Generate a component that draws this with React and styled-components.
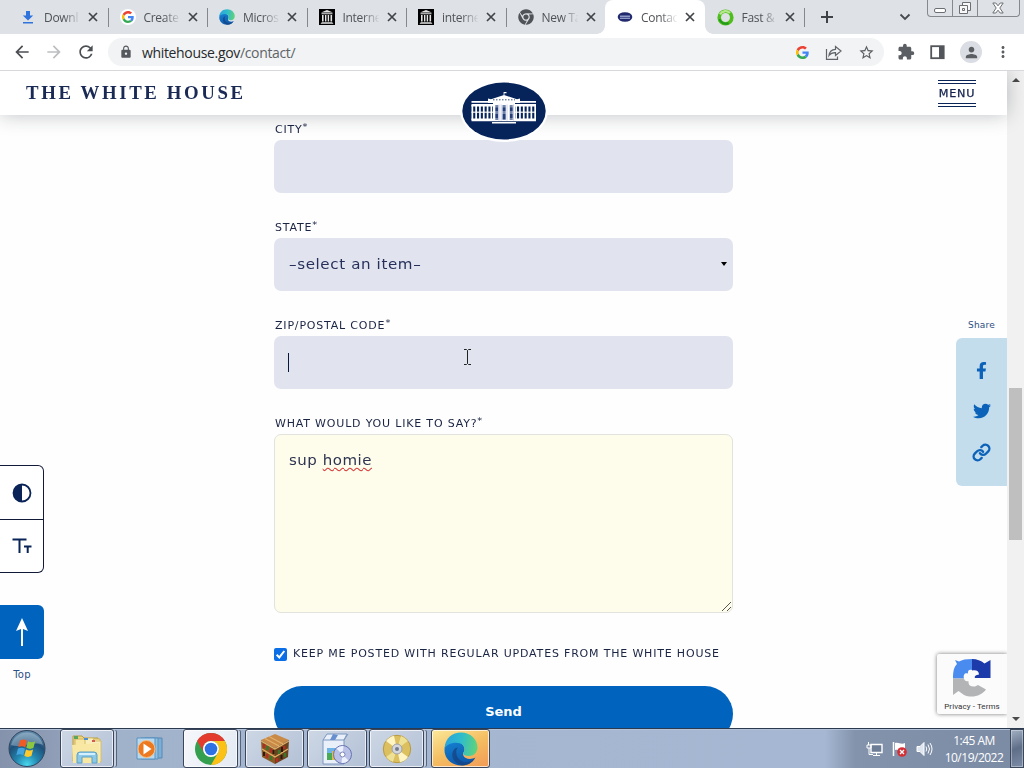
import React from "react";
import styled, { createGlobalStyle, css } from "styled-components";
import { Link2 as _L, Link as LinkIcon } from "lucide-react";
import { FaFacebookF, FaTwitter, FaChrome } from "react-icons/fa";
import { MdExtension, MdLock, MdPerson, MdMoreVert, MdArrowBack, MdArrowForward, MdRefresh, MdStarBorder } from "react-icons/md";

const NAVY = "#0a2458";
const BLUE = "#0063bd";
const UI = `"Open Sans", "Noto Sans", sans-serif`;
const WIDE = `"DejaVu Sans", sans-serif`;

const Global = createGlobalStyle`
  *, *::before, *::after { box-sizing: border-box; }
  body { margin: 0; overflow: hidden; background: #fff; font-family: ${UI}; }
  svg { display: block; flex: none; }
`;

const Screen = styled.div`
  width: 1024px;
  height: 768px;
  display: flex;
  flex-direction: column;
  overflow: hidden;
`;

/* Browser tabs */
const TabStrip = styled.div`
  height: 34px;
  flex: none;
  display: flex;
  padding-left: 8px;
  background: #dee1e6;
`;
const Tab = styled.div`
  position: relative;
  width: 99.5px;
  flex: none;
  display: flex;
  align-items: center;
  padding: 0 9px 0 12px;
  font-size: 12px;
  color: #505357;
  ${(p) => p.$active && css`
    background: #fff;
    border-radius: 8px 8px 0 0;
    &::before, &::after {
      content: "";
      position: absolute;
      bottom: 0;
      width: 8px;
      height: 8px;
    }
    &::before { left: -8px; background: radial-gradient(circle at 0 0, transparent 7.5px, #fff 8px); }
    &::after { right: -8px; background: radial-gradient(circle at 100% 0, transparent 7.5px, #fff 8px); }
  `}
`;
const TabTitle = styled.span`
  width: 36px;
  margin-left: 8px;
  margin-right: 8px;
  overflow: hidden;
  white-space: nowrap;
  letter-spacing: -0.3px;
  mask-image: linear-gradient(90deg, #000 55%, transparent 102%);
`;
const TabLine = styled.div`
  width: 1px;
  height: 19px;
  margin: 8px -1px 0 0;
  background: #84878b;
`;
const StripTools = styled.div`
  flex: 1;
  display: flex;
  align-items: flex-start;
`;
const NewTab = styled.div` margin: 10px 0 0 16px; `;
const TabSearch = styled.div` margin: 13px 0 0 65px; `;
const WindowButtons = styled.div`
  display: flex;
  width: 93px;
  height: 17px;
  margin-left: 16px;
  border: 1px solid #85888d;
  border-top: 0;
  border-radius: 0 0 4px 4px;
`;
const WindowButton = styled.div`
  width: ${(p) => p.$w}px;
  height: 16px;
  display: flex;
  align-items: center;
  justify-content: center;
  & + & { border-left: 1px solid #85888d; }
`;

/* Toolbar */
const Toolbar = styled.div`
  height: 37px;
  flex: none;
  display: flex;
  align-items: center;
  padding: 0 12px 0 12px;
  background: #fff;
  border-bottom: 1px solid #d6d8db;
  color: #5b5e62;
`;
const NavIcons = styled.div`
  display: flex;
  gap: 12px;
`;
const AddressBar = styled.div`
  display: flex;
  align-items: center;
  width: 776px;
  height: 28px;
  margin-left: 12px;
  padding: 0 9px 0 11px;
  border-radius: 14px;
  background: #f1f3f4;
`;
const Url = styled.div`
  flex: 1;
  margin-left: 9px;
  font-size: 14px;
  letter-spacing: -0.34px;
  color: #5f6368;
  b { font-weight: 400; color: #27292c; }
`;
const AddressActions = styled.div`
  display: flex;
  align-items: center;
  gap: 16px;
`;
const ToolActions = styled.div`
  display: flex;
  align-items: center;
  gap: 15px;
  margin-left: 13px;
`;
const Avatar = styled.div`
  width: 22px;
  height: 22px;
  border-radius: 50%;
  background: #dadde3;
  display: grid;
  place-items: center;
  margin-right: -3px;
`;

/* Web page */
const Viewport = styled.div`
  height: 657px;
  flex: none;
  display: flex;
  overflow: hidden;
`;
const Page = styled.div`
  width: 1007px;
  height: 657px;
  background: #fefefe;
`;
const Header = styled.header`
  position: relative;
  z-index: 2;
  height: 44px;
  display: flex;
  align-items: center;
  justify-content: space-between;
  padding: 0 31px 0 26px;
  background: #fff;
  box-shadow: 0 0 20px rgba(30, 35, 45, 0.28);
`;
const Wordmark = styled.div`
  font: bold 18px "Liberation Serif", serif;
  letter-spacing: 2.5px;
  transform: scaleX(1.045);
  transform-origin: left;
  color: #1a2a55;
`;
const Seal = styled.div`
  position: absolute;
  left: 460px;
  top: 9px;
`;
const MenuButton = styled.div`
  width: 38px;
  height: 27px;
  border-top: 4px double ${NAVY};
  border-bottom: 4px double ${NAVY};
  color: #14234e;
`;
const MenuText = styled.div`
  font: 10px/19px ${WIDE};
  letter-spacing: 0.7px;
  text-align: center;
  white-space: nowrap;
  transform: scaleX(1.12);
  -webkit-text-stroke: 0.25px #14234e;
`;
const Columns = styled.div`
  display: grid;
  grid-template-columns: 274px 459px 274px;
  height: 613px;
`;
const LeftRail = styled.aside`
  padding-top: 350px;
  width: 44px;
`;
const AccessBox = styled.div`
  height: 108px;
  display: grid;
  grid-template-rows: 1fr 1fr;
  border: 1px solid #111a38;
  border-left: 0;
  border-radius: 0 6px 6px 0;
  background: #fff;
`;
const AccessItem = styled.div`
  display: grid;
  place-items: center;
  & + & { border-top: 1px solid #111a38; }
`;
const TopButton = styled.div`
  height: 54px;
  margin: 32px 0 9px;
  display: grid;
  place-items: center;
  background: ${BLUE};
  border-radius: 0 6px 6px 0;
`;
const RailLabel = styled.div`
  font: ${(p) => p.$size}px/14px ${WIDE};
  letter-spacing: 0.2px;
  text-align: center;
  color: #2c4f84;
`;
const Form = styled.form`
  display: flex;
  flex-direction: column;
  gap: 20px;
`;
const Caps = styled.span`
  display: inline-block;
  font-family: ${WIDE};
  font-size: 10px;
  letter-spacing: 0.74px;
  text-transform: uppercase;
  white-space: nowrap;
  transform: scaleX(1.1);
  transform-origin: left;
  color: #1a2443;
  sup { font-size: 9px; line-height: 0; vertical-align: 3px; letter-spacing: 0; }
`;
const Label = styled.label`
  display: block;
  height: 25px;
  padding-left: 0.5px;
  line-height: 29px;
  font-size: 10px;
`;
const Control = styled.div`
  height: 53px;
  display: flex;
  align-items: center;
  justify-content: space-between;
  padding: 0 6px 1px 14px;
  border-radius: 7px;
  background: #e1e4ee;
  font: 15px ${WIDE};
  color: #26305a;
`;
const ControlText = styled.span`
  font-size: 14.5px;
  letter-spacing: 0.6px;
  transform: scaleX(1.04);
  transform-origin: left;
  margin-left: 0.5px;
`;
const Caret = styled.i`
  width: 1px;
  height: 19px;
  background: #0a1640;
`;
const Pointer = styled.div` margin-right: 256px; margin-top: -11px; `;
const Message = styled.div`
  height: 179px;
  display: flex;
  flex-direction: column;
  justify-content: space-between;
  padding: 16px 1px 1px 14px;
  border: 1px solid #e2e3dc;
  border-radius: 7px;
  background: #fefceb;
  font: 14.5px/18px ${WIDE};
  color: #2d3450;
`;
const MessageText = styled.span`
  letter-spacing: 0.5px;
  transform: scaleX(1.035);
  transform-origin: left;
`;
const Typo = styled.span`
  text-decoration: underline wavy #d53636 1px;
  text-decoration-skip-ink: none;
  text-underline-offset: 2px;
`;
const Grip = styled.div` align-self: flex-end; `;
const Consent = styled.div`
  display: flex;
  align-items: center;
  gap: 6px;
  height: 14px;
  margin-top: 14px;
  ${Caps} { margin-top: -2px; }
`;
const Check = styled.span`
  width: 13px;
  height: 13px;
  border-radius: 2px;
  background: #0a6fe6;
`;
const SendButton = styled.div`
  height: 56px;
  margin-top: 5px;
  border-radius: 28px;
  background: ${BLUE};
  color: #fff;
  font: bold 13px/51px ${WIDE};
  letter-spacing: -0.1px;
  text-align: center;
`;
const RightRail = styled.aside`
  display: flex;
  flex-direction: column;
  align-items: flex-end;
  padding-top: 203px;
`;
const Share = styled.div` width: 51px; `;
const ShareBox = styled.div`
  height: 148px;
  margin-top: 6px;
  display: flex;
  flex-direction: column;
  align-items: center;
  gap: 23px;
  padding-top: 24px;
  border-radius: 6px 0 0 6px;
  background: #c4dded;
  color: #0b62b8;
`;
const Recaptcha = styled.div`
  width: 70px;
  height: 60px;
  margin-top: 168px;
  padding-top: 5px;
  display: flex;
  flex-direction: column;
  align-items: center;
  gap: 4px;
  background: #fbfbfb;
  border-radius: 2px 0 0 2px;
  box-shadow: 0 0 4px #777;
  clip-path: inset(-5px 0 -5px -5px);
  font: 8px/12px Roboto, sans-serif;
  letter-spacing: 0.08px;
  color: #333;
  white-space: nowrap;
`;
const Scrollbar = styled.div`
  width: 17px;
  display: flex;
  flex-direction: column;
  align-items: center;
  justify-content: space-between;
  padding: 7px 0 7px;
  background: #f1f1f1;
`;
const Arrow = styled.i`
  border: 4px solid transparent;
  ${(p) => (p.$up ? "border-top: 0; border-bottom: 4px solid #4a4a4a;" : "border-bottom: 0; border-top: 4px solid #4a4a4a;")}
`;
const Thumb = styled.div`
  width: 13px;
  height: 152px;
  margin-top: 129px;
  background: #bfbfbf;
`;

/* Taskbar */
const Taskbar = styled.div`
  height: 40px;
  flex: none;
  display: flex;
  align-items: stretch;
  border-top: 1px solid #2c3a50;
  box-shadow: inset 0 1px 0 #b3c2d8;
  background: linear-gradient(90deg, #8493ab 0, #8f9eb6 55px, #a0b1ca 120px, #a5b6d0 300px, #a5b7d2 825px, #8393ac 855px, #7b8ba4 100%);
`;
const Start = styled.div` margin: 0 14px 0 8px; `;
const Task = styled.div`
  width: ${(p) => p.$w}px;
  margin-right: ${(p) => p.$gap}px;
  display: grid;
  place-items: center;
  border-radius: 3px;
  ${(p) => !p.$flat && css`
    border: 1px solid #3a465b;
    box-shadow: inset 0 0 0 1px rgba(255, 255, 255, 0.7)${p.$stack ? ", 3px 0 0 -1px #c4d0e2, 4px 0 0 -1px #56647c" : ""};
    background: ${p.$bg || "linear-gradient(135deg, #cdd7e5, #b3c1d6)"};
  `}
`;
const Tray = styled.div`
  margin-left: auto;
  display: flex;
  align-items: center;
  gap: 8px;
`;
const Clock = styled.div`
  width: 60px;
  margin: 0 0 0 3px;
  font-size: 12px;
  line-height: 17px;
  letter-spacing: -0.5px;
  text-align: center;
  white-space: nowrap;
  color: #fff;
`;
const ShowDesktop = styled.div`
  width: 14px;
  height: 39px;
  margin: 0 0 0 -2px;
  border: 1px solid #3b485c;
  box-shadow: inset 0 0 0 1px rgba(255, 255, 255, 0.35);
  background: linear-gradient(160deg, #a3b0c3, #5f6f88 50%, #7c8ca6);
`;

const Close = () => (
  <svg width="10" height="10" viewBox="0 0 10 10" stroke="#404347" strokeWidth="1.7"><path d="M1 1l8 8M9 1l-8 8" /></svg>
);
const Google = ({ size = 16 }) => (
  <svg width={size} height={size} viewBox="0 0 48 48">
    <path fill="#EA4335" d="M24 9.5c3.54 0 6.7 1.22 9.2 3.6l6.85-6.85C35.9 2.4 30.5 0 24 0 14.6 0 6.5 5.4 2.6 13.2l8 6.2C12.4 13.7 17.7 9.5 24 9.5z" />
    <path fill="#4285F4" d="M47 24.6c0-1.6-.2-3.1-.4-4.6H24v9h12.9c-.6 3-2.2 5.5-4.7 7.2l7.7 6C44.4 38 47 32 47 24.600z" />
    <path fill="#FBBC05" d="M10.500 28.600A14.500 14.500 0 0 1 10.500 19.400l-8-6.200a24 24 0 0 0 0 21.600z" />
    <path fill="#34A853" d="M24 48c6.500 0 11.900-2.100 15.900-5.800l-7.700-6c-2.200 1.500-4.900 2.300-8.200 2.300-6.300 0-11.600-4.200-13.500-9.900l-8 6.200C6.500 42.600 14.600 48 24 48z" />
  </svg>
);
const GoogleDisc = () => (
  <svg width="16" height="16" viewBox="0 0 16 16"><circle cx="8" cy="8" r="8" fill="#fff" /><g transform="translate(2 2)"><Google size={12} /></g></svg>
);
const Download = () => (
  <svg width="16" height="16" viewBox="0 0 16 16" fill="#2f73dd"><path d="M6 2h4v4.500h3.200L8 11.500 2.800 6.500H6zM3 13h10v1.500H3z" /></svg>
);
const Edge = ({ size = 16, id }) => (
  <svg width={size} height={size} viewBox="0 0 32 32">
    <defs>
      <linearGradient id={id + "a"} x1="0" y1="0.3" x2="1" y2="0.4"><stop stopColor="#2ba3dd" /><stop offset="0.5" stopColor="#2fbccb" /><stop offset="1" stopColor="#5fd37b" /></linearGradient>
      <linearGradient id={id + "b"} x1="0" y1="0" x2="0.5" y2="1"><stop stopColor="#1583d3" /><stop offset="1" stopColor="#0e57ab" /></linearGradient>
    </defs>
    <path fill={"url(#" + id + "b)"} d="M.5 16C1 9.500 6 7.500 11 8.500c6 1 9 5 8.200 9-.4 1.500-1.700 2.500-1 4.500 1.200 3.300 6.800 4.500 11.300 2C27 29 22 31.500 16 31.500 7.500 31.500 0 25 .5 16z" />
    <path fill={"url(#" + id + "a)"} d="M.6 15C1 6 8 .5 16 .5c9 0 15.500 6.500 15.500 14 0 5-3.800 8-8 8-3.500 0-5.500-1.200-5.500-2.300 0-1 1.400-1.600 1.400-4 0-3.600-3.200-6.200-8-6.200C6.500 10 2.500 12 .6 15z" />
    <path fill="#154381" d="M13 14.500c-3 4-1.500 11 5 13.500 4 1.500 8.500-.5 11.500-4C26 30 21 31.700 17 31.500 9.500 29.500 7 24 8 19.500c.8-3 2.500-4.600 5-5z" opacity=".75" />
  </svg>
);
const Archive = () => (
  <svg width="16" height="16" viewBox="0 0 16 16">
    <path fill="#000" d="M0 0h16v16H0z" />
    <path fill="#e5e5e5" d="M8 1l6 2.500H2zM2.500 4.200h11v1h-11zM3 6h1.600v6.500H3zM6 6h1.400v6.500H6zM8.700 6h1.400v6.500H8.700zM11.500 6h1.600v6.500h-1.600zM2.500 13h11v.8h-11zM1.800 14.300h12.400v.8H1.800z" />
  </svg>
);
const MiniSeal = () => (
  <svg width="16" height="16" viewBox="0 0 16 16"><ellipse cx="8" cy="8" rx="7.300" ry="4.800" fill="#202a6c" /><path d="M3 6.500h10V10H3z" fill="#8f9bc6" /><path d="M3 8.500h10" stroke="#4c5794" /></svg>
);
const Ring = () => (
  <svg width="17" height="17" viewBox="0 0 17 17" fill="none"><circle cx="8.500" cy="8.500" r="6.300" stroke="#4fbd1c" strokeWidth="3.600" /><path d="M3 5.400A6.300 6.300 0 0 1 13 4" stroke="#b5e88c" strokeWidth="2.400" /><path d="M2.500 10a6.300 6.300 0 0 0 9 4" stroke="#23991d" strokeWidth="2" /></svg>
);
const ShareIcon = () => (
  <svg width="17" height="17" viewBox="0 0 17 17" fill="none" stroke="#606469" strokeWidth="1.200"><path d="M1.500 5v10.300h11V12.500M4 11.500C4.500 7.500 7 5.500 10.500 5.300V2.500L16 7l-5.500 4.500V8.700C7.500 8.600 5.500 9.500 4 11.500z" /></svg>
);
const SidePanel = () => (
  <svg width="15" height="15" viewBox="0 0 15 15"><rect x="1.200" y="1.200" width="12.500" height="12" fill="#fff" stroke="#525559" strokeWidth="1.800" /><path d="M9 1h5v12.500H9z" fill="#525559" /></svg>
);

const WhiteHouse = () => {
  const wing = [0, 1, 2, 3, 4, 5];
  return (
    <svg width="88" height="62" viewBox="0 0 88 62">
      <ellipse cx="44" cy="31" rx="44" ry="31" fill="#fff" />
      <ellipse cx="44" cy="31" rx="41.700" ry="28.500" fill="#06235a" />
      <g fill="#fff">
        <path d="M11.500 21h21v1.700h-21zM55 21h21v1.700H55zM28 18.500l3 .8L44 15l13 4.300 3-.8v2.700H28zM11.500 24h64.500v2.500H11.500zM11.500 38.500h64.500v2.700H11.500zM32 42h24v1.500H32zM43.600 12h.8v4h-.8zM44 12h2.500v1.300H44zM28 20.500h32V23H28zM33 22.500h22V40H33z" />
        {wing.map((i) => <path key={"l" + i} d={`M${11.500 + i * 3.800} 25h1.700v15h-1.700z`} />)}
        {wing.map((i) => <path key={"r" + i} d={`M${55.300 + i * 3.800} 25h1.700v15h-1.700z`} />)}
        <path d="M11.500 31.500h22v1.400h-22zM55 31.500h21v1.400H55z" opacity=".75" />
      </g>
      <g fill="#7485ad"><path d="M35.300 25h3v15h-3zM42.500 25h3.200v15h-3.200zM49.700 25h3v15h-3z" /></g>
      <path d="M39 24.500v16M41.200 24.500v16M47 24.500v16M53.500 24.500v16" stroke="#a9b3cf" strokeWidth=".6" />
      <path d="M35.500 27.500h2.500v3.500h-2.500zM42.800 27.500h2.600v3.500h-2.600zM50 27.500h2.500v3.500H50zM35.500 34h2.500v4h-2.500zM42.800 34h2.600v5h-2.600zM50 34h2.500v4H50z" fill="#263f78" />
      <path d="M33 19.800h22" stroke="#06235a" strokeWidth=".8" strokeDasharray="1.500 1.500" />
    </svg>
  );
};

const Orb = () => (
  <svg width="38" height="39" viewBox="0 0 38 39">
    <defs>
      <radialGradient id="orb" cx="0.5" cy="0.95" r="0.9"><stop stopColor="#49d7ee" /><stop offset="0.35" stopColor="#2387b0" /><stop offset="0.7" stopColor="#1f4f78" /><stop offset="1" stopColor="#5f88a8" /></radialGradient>
    </defs>
    <circle cx="19" cy="19.500" r="18" fill="url(#orb)" stroke="#31465f" />
    <path d="M3 16a16.500 16.500 0 0 1 32 0C25 11 13 20 3 16z" fill="#dcebf4" opacity=".35" />
    <path fill="#ee5b27" d="M12 11.500c2.500-1.400 4.800-1.200 7 .2l-1.700 6.800c-2.300-1.500-4.500-1.500-7-.2z" />
    <path fill="#8dc63f" d="M20 12.200c2.500 1.300 4.700 1.300 7.200.1l-1.800 6.800c-2.400 1.200-4.800 1-7.100-.3z" />
    <path fill="#43a5e0" d="M10 19.600c2.500-1.300 4.800-1.100 7 .2l-1.700 6.500c-2.300-1.400-4.500-1.300-7 0z" />
    <path fill="#fdc92d" d="M18 20.400c2.400 1.300 4.700 1.300 7.100.1l-1.700 6.600c-2.500 1.200-4.800 1-7.100-.4z" />
  </svg>
);
const Explorer = () => (
  <svg width="34" height="32" viewBox="0 0 34 32">
    <path d="M3 3h9l2 2h14v23H3z" fill="#efd77c" stroke="#b99b45" />
    <path d="M5 6h25v23H5z" fill="#f7e7a2" stroke="#d0b25c" /><path d="M15 5h8l1 3h7v21H15z" fill="#f9eebb" stroke="#d6bd6b" />
    <path d="M4 3h4v3H4z" fill="#5aa65d" /><path d="M14 5h4v2h-4z" fill="#4e8fd2" /><path d="M22 7h3v2h-3z" fill="#d35b50" />
    <path d="M2 12l27-2 1 20H3z" fill="#f8e8a4" />
    <path d="M7 30V22q0-3 3-3h14q3 0 3 3v8h-5v-6H12v6z" fill="#8cc9e8" stroke="#5d9fc5" />
    <path d="M9 21h16" stroke="#d3f0fc" strokeWidth="2" />
  </svg>
);
const MediaPlayer = () => (
  <svg width="28" height="28" viewBox="0 0 28 28">
    <path d="M9 3h17v20H9z" fill="#7daed4" stroke="#5688b5" /><path d="M5 3h17v21H5z" fill="#91c0e2" stroke="#5b92bf" /><path d="M1 3h18v21H1z" fill="#b8daf0" stroke="#5b92bf" />
    <circle cx="10.500" cy="14" r="8.500" fill="#ec7920" stroke="#f8be83" /><path d="M7.500 8.500l8 5.500-8 5.500z" fill="#fff" />
  </svg>
);
const Chrome = () => (
  <svg width="34" height="34" viewBox="0 0 34 34">
    <circle cx="17" cy="17" r="16" fill="#34a04f" />
    <path d="M3.140 9A16 16 0 0 1 30.860 9H17A8 8 0 0 0 10.070 21z" fill="#e33b2e" />
    <path d="M30.860 9A16 16 0 0 1 17 33L23.930 21A8 8 0 0 0 17 9z" fill="#fbc116" />
    <circle cx="17" cy="17" r="8" fill="#fff" /><circle cx="17" cy="17" r="6.300" fill="#2e71e5" />
  </svg>
);
const Block = () => (
  <svg width="32" height="32" viewBox="0 0 32 32">
    <path d="M16 1l14 6-14 8L2 7z" fill="#c98a48" /><path d="M2 7l14 8v16L3 24z" fill="#8a5a26" /><path d="M30 7l-14 8v16l13-7z" fill="#6a421d" />
    <path d="M6 5.500L20 13M10 3.500l14 7.500M2 8l14 8 14-8M3 16l13 8 13-8" stroke="#e1b068" strokeWidth="1.300" fill="none" />
    <path d="M5 11v4M12 15.500v4M25 13v3M8 21v4M18 25v4" stroke="#b12f22" strokeWidth="2.500" /><path d="M8.500 13v4M20 17v4M12 23v4M26 20v4" stroke="#3c762b" strokeWidth="2.500" /><path d="M14.500 17v4M23 14v5M5 19v4M22.500 22v4" stroke="#2e1a0c" strokeWidth="2" />
  </svg>
);
const Installer = () => (
  <svg width="34" height="34" viewBox="0 0 34 34">
    <path d="M3 8l4-6h20l-3 6v24H3z" fill="#e9f0fa" stroke="#7d97bf" /><path d="M3 8h21l4-6" fill="none" stroke="#7d97bf" /><path d="M10 8l3-6 5 1-3 5z" fill="#6990ce" />
    <path d="M7 16h9v12H7z" fill="#6eb3e5" /><path d="M7 21h9v7H7z" fill="#4aaa54" /><path d="M12 19h4v9h-4z" fill="#e1ba4c" />
    <circle cx="22.500" cy="22.500" r="9" fill="#b9c2e6" stroke="#6773af" /><path d="M22.500 22.500l-6-6a8.500 8.500 0 0 1 7-2.500zM22.500 22.500l6 6a8.500 8.500 0 0 1-7 2.500z" fill="#edf1ff" /><circle cx="22.500" cy="22.500" r="2.500" fill="#fff" stroke="#7a84b7" />
  </svg>
);
const Disc = () => (
  <svg width="30" height="30" viewBox="0 0 30 30">
    <circle cx="15" cy="15" r="13.700" fill="#dcc060" stroke="#b69a42" /><path d="M15 15L4 7a13.500 13.500 0 0 1 8-5.300zM15 15l11 8a13.500 13.500 0 0 1-8 5.300z" fill="#fff4c4" /><path d="M15 15L19 2a13.500 13.500 0 0 1 7 5zM15 15l-4 13a13.500 13.500 0 0 1-7-5z" fill="#eee094" />
    <circle cx="15" cy="15" r="5" fill="#d5d7db" stroke="#9da0a7" /><circle cx="15" cy="15" r="2" fill="#737b8d" />
  </svg>
);
const CaptchaMark = () => (
  <svg width="38" height="38" viewBox="0 0 38 38">
    <path d="M19 0v11c-2.500-1-4.500 0-4 3.500-3-1-5 1-4 5H0C0 12 1 8 4 5L2 1l4 1.500C9 .8 13 0 19 0z" fill="#4a8bef" />
    <path d="M19 0c5 0 9 1.500 12.500 4.500L37.500 1v18H22c-1-2 1-3 4-3.500 0-3.500-3-5-7-4z" fill="#1c3aa9" />
    <path d="M0 19.500h11c.5 2.500 2 3 4.500 2.500-.5 4 2 6 6.500 5.500L25 26l8 4.500C29 36 20 40 11 36L5.500 32 0 36z" fill="#b3b4b6" />
  </svg>
);

const Field = ({ label, children }) => (
  <div><Label><Caps>{label}<sup>*</sup></Caps></Label>{children}</div>
);

const tabs = [
  ["Downl", <Download />, true],
  ["Create", <GoogleDisc />, true],
  ["Micros", <Edge id="tab" />, true],
  ["Interne", <Archive />, true],
  ["interne", <Archive />, true],
  ["New Ta", <FaChrome size={16} />, false],
  ["Contac", <MiniSeal />, false, true],
  ["Fast &", <Ring />, true],
];

export default function App() {
  return (
    <Screen>
      <Global />
      <TabStrip>
        {tabs.map(([title, icon, line, active], i) => (
          <React.Fragment key={i}>
            <Tab $active={active}>{icon}<TabTitle>{title}</TabTitle><Close /></Tab>
            {line && <TabLine />}
          </React.Fragment>
        ))}
        <StripTools>
          <NewTab><svg width="14" height="14" viewBox="0 0 14 14" stroke="#3f4246" strokeWidth="2"><path d="M1 7h12M7 1v12" /></svg></NewTab>
          <TabSearch><svg width="12" height="8" viewBox="0 0 12 8" fill="none" stroke="#46494d" strokeWidth="1.800"><path d="M1.500 1.500L6 6l4.500-4.500" /></svg></TabSearch>
          <WindowButtons>
            <WindowButton $w={24}><svg width="12" height="16" viewBox="0 0 12 16"><rect x=".5" y="8.500" width="11" height="4" rx="1.500" fill="#fff" stroke="#6b6e73" /></svg></WindowButton>
            <WindowButton $w={25}><svg width="14" height="14" viewBox="0 0 14 14" fill="#f8f8f8" stroke="#6b6e73"><path d="M4.500 1.500h8v8h-8z" /><path d="M1.500 4.500h8v8h-8z" /><path d="M4.500 7.500h2v2h-2z" /></svg></WindowButton>
            <WindowButton $w={41}><svg width="12" height="12" viewBox="0 0 12 12" fill="#fff" stroke="#6b6e73"><path d="M.8 1h3L6 3.800 8.200 1h3L7.800 6l3.400 5h-3L6 8.200 3.800 11h-3l3.400-5z" /></svg></WindowButton>
          </WindowButtons>
        </StripTools>
      </TabStrip>

      <Toolbar>
        <NavIcons><MdArrowBack size={20} color="#4b4e52" /><MdArrowForward size={20} color="#bcbec1" /><MdRefresh size={20} color="#4b4e52" /></NavIcons>
        <AddressBar>
          <MdLock size={14} color="#55585c" />
          <Url><b>whitehouse.gov</b>/contact/</Url>
          <AddressActions><Google size={13} /><ShareIcon /><MdStarBorder size={17} /></AddressActions>
        </AddressBar>
        <ToolActions>
          <MdExtension size={18} /><SidePanel /><Avatar><MdPerson size={17} /></Avatar><MdMoreVert size={18} />
        </ToolActions>
      </Toolbar>

      <Viewport>
        <Page>
          <Header>
            <Wordmark>THE WHITE HOUSE</Wordmark>
            <Seal><WhiteHouse /></Seal>
            <MenuButton><MenuText>MENU</MenuText></MenuButton>
          </Header>
          <Columns>
            <LeftRail>
              <AccessBox>
                <AccessItem><svg width="20" height="20" viewBox="0 0 20 20"><circle cx="10" cy="10" r="8.500" fill="#fff" stroke={NAVY} strokeWidth="1.800" /><path d="M10 1.500a8.500 8.500 0 0 0 0 17z" fill={NAVY} /></svg></AccessItem>
                <AccessItem><svg width="20" height="16" viewBox="0 0 20 16" stroke={NAVY} fill="none"><path d="M.5 1.500h14M7.500 1.500V15" strokeWidth="2" /><path d="M12 8.500h7.500M15.700 8.500V15" strokeWidth="2" /></svg></AccessItem>
              </AccessBox>
              <TopButton><svg width="12" height="28" viewBox="0 0 12 28" fill="#fff"><path d="M6 0l6 13-5-2v17H5V11l-5 2z" /></svg></TopButton>
              <RailLabel $size={10}>Top</RailLabel>
            </LeftRail>

            <Form>
              <Field label="City"><Control /></Field>
              <Field label="State">
                <Control><ControlText>–select an item–</ControlText><svg width="6" height="4" viewBox="0 0 6 4"><path d="M0 0h6L3 4z" /></svg></Control>
              </Field>
              <Field label="Zip/Postal Code">
                <Control><Caret />
                  <Pointer><svg width="7" height="16" viewBox="0 0 7 16" fill="none" stroke="#222"><path d="M0 .5h2.500l1 1 1-1H7M0 15.500h2.500l1-1 1 1H7M3.500 1.500v13" /></svg></Pointer>
                </Control>
              </Field>
              <Field label="What would you like to say?">
                <Message>
                  <MessageText>sup <Typo>homie</Typo></MessageText>
                  <Grip><svg width="9" height="9" viewBox="0 0 9 9" stroke="#555"><path d="M0 9L9 0M5 9l4-4" /></svg></Grip>
                </Message>
              </Field>
              <Consent>
                <Check><svg width="13" height="13" viewBox="0 0 13 13" fill="none" stroke="#fff" strokeWidth="2"><path d="M2.700 6.800l2.600 2.600 5-6.400" /></svg></Check>
                <Caps>Keep me posted with regular updates from The White House</Caps>
              </Consent>
              <SendButton>Send</SendButton>
            </Form>

            <RightRail>
              <Share>
                <RailLabel $size={9}>Share</RailLabel>
                <ShareBox><FaFacebookF size={17} /><FaTwitter size={18} /><LinkIcon size={19} strokeWidth={3} /></ShareBox>
              </Share>
              <Recaptcha><CaptchaMark /><span>Privacy - Terms</span></Recaptcha>
            </RightRail>
          </Columns>
        </Page>
        <Scrollbar><Arrow $up /><Thumb /><Arrow /></Scrollbar>
      </Viewport>

      <Taskbar>
        <Start><Orb /></Start>
        <Task $w={54} $gap={6} $stack><Explorer /></Task>
        <Task $w={60} $gap={3} $flat><MediaPlayer /></Task>
        <Task $w={55} $gap={7} $stack $bg="linear-gradient(110deg, #f5f7fb, #e4eaf3)"><Chrome /></Task>
        <Task $w={59} $gap={3}><Block /></Task>
        <Task $w={60} $gap={2}><Installer /></Task>
        <Task $w={55} $gap={7} $stack><Disc /></Task>
        <Task $w={59} $gap={0} $bg="linear-gradient(155deg, #fbe99a, #f5be62 50%, #f29a55)"><Edge size={34} id="task" /></Task>
        <Tray>
          <svg width="17" height="16" viewBox="0 0 17 16"><path d="M5 3.500h11v8H5z" fill="#6d7d95" stroke="#fff" strokeWidth="1.400" /><path d="M7 14.500h7M10.500 12v2M2.500 1v3M1 4h4v3H1zM3 7v6.500h4" fill="none" stroke="#fff" /></svg>
          <svg width="17" height="16" viewBox="0 0 17 16"><path d="M2.500 1v14" stroke="#fff" strokeWidth="1.500" /><path d="M4 2c4-1 6 2 10 0v7c-4 2-6-1-10 0z" fill="#fff" /><circle cx="11" cy="11" r="4.800" fill="#d32f35" /><path d="M9 9l4 4M13 9l-4 4" stroke="#fff" strokeWidth="1.300" /></svg>
          <svg width="17" height="16" viewBox="0 0 17 16" fill="none" stroke="#fff"><path d="M1 5.500h3l4-4v13l-4-4H1z" fill="#dfe5ee" /><path d="M10 5.500q1.500 2.500 0 5M12 3.500q3 4.500 0 9M14 2q4 6 0 12" /></svg>
          <Clock>1:45 AM<br />10/19/2022</Clock>
          <ShowDesktop />
        </Tray>
      </Taskbar>
    </Screen>
  );
}
